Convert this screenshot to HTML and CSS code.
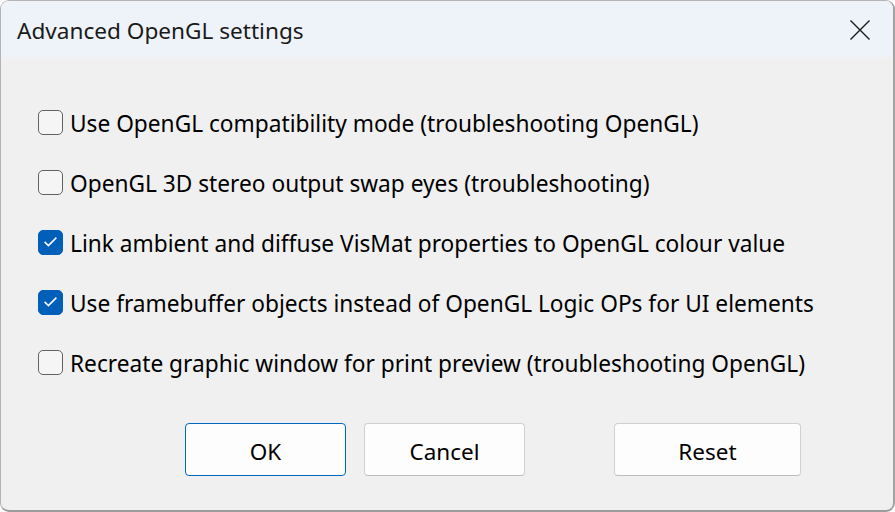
FILE: index.html
```html
<!DOCTYPE html>
<html lang="en">
<head>
<meta charset="utf-8">
<title>Advanced OpenGL settings</title>
<link rel="stylesheet" href="styles.css">
</head>
<body>
<div class="window">
  <div class="titlebar">
    <span class="title">Advanced OpenGL settings</span>
    <span class="close" aria-label="Close">
      <svg width="22" height="22" viewBox="0 0 22 22"><path d="M1.5 1.5 L20.5 20.5 M20.5 1.5 L1.5 20.5" stroke="#1b1b1b" stroke-width="1.4" fill="none"/></svg>
    </span>
  </div>
  <div class="content">
    <div class="options">
      <label class="option"><span class="box"></span><span class="text">Use OpenGL compatibility mode (troubleshooting OpenGL)</span></label>
      <label class="option"><span class="box"></span><span class="text">OpenGL 3D stereo output swap eyes (troubleshooting)</span></label>
      <label class="option"><span class="box checked"><svg width="25" height="25" viewBox="0 0 25 25"><path d="M6.6 12.9 L10.4 16.6 L18.4 8.6" stroke="#fff" stroke-width="1.5" fill="none"/></svg></span><span class="text">Link ambient and diffuse VisMat properties to OpenGL colour value</span></label>
      <label class="option"><span class="box checked"><svg width="25" height="25" viewBox="0 0 25 25"><path d="M6.6 12.9 L10.4 16.6 L18.4 8.6" stroke="#fff" stroke-width="1.5" fill="none"/></svg></span><span class="text">Use framebuffer objects instead of OpenGL Logic OPs for UI elements</span></label>
      <label class="option"><span class="box"></span><span class="text">Recreate graphic window for print preview (troubleshooting OpenGL)</span></label>
    </div>
    <div class="buttons">
      <button class="btn default">OK</button>
      <button class="btn">Cancel</button>
      <button class="btn reset">Reset</button>
    </div>
  </div>
</div>
</body>
</html>
```
FILE: styles.css
```css
html, body {
  margin: 0;
  padding: 0;
  background: #ffffff;
}
body {
  font-family: "Noto Sans", "Open Sans", sans-serif;
  color: #000;
}
.window {
  width: 895px;
  height: 512px;
  box-sizing: border-box;
  border: 1px solid #b4b4b4;
  border-right: 2px solid #a2a2a2;
  border-bottom: 2px solid #9c9c9c;
  border-radius: 9px;
  overflow: hidden;
  background: #f0f0f0;
  display: flex;
  flex-direction: column;
}
.titlebar {
  height: 56px;
  background: #eef3f9;
  display: flex;
  align-items: center;
  justify-content: space-between;
  padding: 0 22px 0 16px;
  flex: none;
}
.title {
  font-size: 22.6px;
  color: #1a1a1a;
  padding-top: 3px;
}
.close {
  display: flex;
  width: 22px;
  height: 22px;
  margin-top: 1px;
}
.content {
  flex: 1;
  display: flex;
  flex-direction: column;
  padding: 35px 0 0 37px;
}
.options {
  display: flex;
  flex-direction: column;
}
.option {
  height: 60px;
  display: flex;
  align-items: center;
  gap: 7px;
  font-size: 22.7px;
}
.box {
  width: 25px;
  height: 25px;
  box-sizing: border-box;
  border: 1.5px solid #626262;
  border-radius: 5px;
  background: #f5f5f5;
  flex: none;
  position: relative;
}
.box.checked {
  background: #005fb8;
  border-color: #005fb8;
}
.box.checked svg {
  position: absolute;
  left: -1.5px;
  top: -1.5px;
}
.text {
  padding-top: 3px;
  white-space: nowrap;
}
.buttons {
  display: flex;
  margin-top: 31px;
  padding-left: 147px;
  gap: 18px;
}
.btn {
  font-family: "Noto Sans", "Open Sans", sans-serif;
  font-size: 22.5px;
  color: #000;
  width: 161px;
  height: 53px;
  background: #fdfdfd;
  border: 1px solid #d0d0d0;
  border-bottom-color: #bcbcbc;
  border-radius: 4px;
  padding: 4px 0 0;
}
.btn.default {
  border: 1px solid #0067c0;
}
.btn.reset {
  width: 187px;
  margin-left: 71px;
}
```
